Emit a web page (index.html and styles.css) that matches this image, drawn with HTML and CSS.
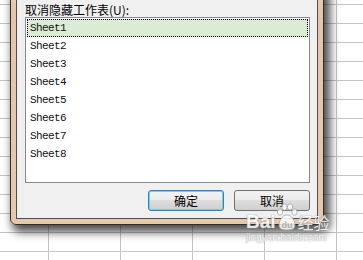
FILE: index.html
```html
<!DOCTYPE html>
<html lang="zh-CN">
<head>
    <meta charset="UTF-8">
    <title>取消隐藏</title>
    <link rel="stylesheet" href="styles.css">
</head>
<body>
    <div class="sheet">
        <!-- Unhide dialog, its title bar is scrolled out of view -->
        <div class="dialog">
            <div class="panel">
                <div class="caption">取消隐藏工作表(U):</div>
                <ul class="sheet-list">
                    <li class="selected">Sheet1</li>
                    <li>Sheet2</li>
                    <li>Sheet3</li>
                    <li>Sheet4</li>
                    <li>Sheet5</li>
                    <li>Sheet6</li>
                    <li>Sheet7</li>
                    <li>Sheet8</li>
                </ul>
                <div class="actions">
                    <button class="btn btn-default">确定</button>
                    <button class="btn">取消</button>
                </div>
            </div>
        </div>

        <div class="watermark">
            <div class="wm-logo">
                <span class="wm-bai">Bai</span>
                <svg class="wm-paw" width="22" height="28" viewBox="0 0 22 28">
                    <ellipse cx="4" cy="9" rx="2.6" ry="3.2" />
                    <ellipse cx="8.5" cy="4" rx="2.6" ry="3.2" />
                    <ellipse cx="14" cy="4" rx="2.6" ry="3.2" />
                    <ellipse cx="18.5" cy="9" rx="2.6" ry="3.2" />
                    <path d="M11 12 C6 12 3 18 3 22 C3 26 6 27 11 27 C16 27 19 26 19 22 C19 18 16 12 11 12 Z" />
                    <text x="11" y="24.5" text-anchor="middle">du</text>
                </svg>
                <span class="wm-cn">经验</span>
            </div>
            <div class="wm-url">jingyan.baidu.com</div>
        </div>
    </div>
</body>
</html>
```

FILE: styles.css
```css
/* Page is the spreadsheet grid behind the dialog */
body {
    margin: 0;
    font-family: "Noto Sans CJK SC", "Liberation Sans", sans-serif;
    font-size: 12px;
}

.sheet {
    position: relative;
    width: 363px;
    height: 260px;
    overflow: hidden;
    background-color: #fff;
    background-image:
        linear-gradient(to right, #c4c4c4 1px, transparent 1px),
        linear-gradient(to bottom, #c4c4c4 1px, transparent 1px);
    background-size: 72px 19px;
    background-position: 48px 4px;
}

/* Window frame (aero basic, beige) */
.dialog {
    position: absolute;
    left: 10px;
    top: -40px;
    width: 314px;
    height: 265px;
    box-sizing: border-box;
    padding: 5px;
    border: 1px solid #2e2e2e;
    border-radius: 6px;
    background: linear-gradient(to bottom, #eedccb 0, #e5c6a8 50px, #e6c8ab 100%);
    box-shadow: 4px 5px 10px 2px rgba(0, 0, 0, 0.7);
}

.panel {
    height: 100%;
    box-sizing: border-box;
    display: flex;
    flex-direction: column;
    justify-content: flex-end;
    padding: 0 7px 7px 8px;
    border: 1px solid #4e4e4e;
    background-color: #f0f0f0;
}

.caption {
    line-height: 14px;
    color: #000;
    white-space: nowrap;
}

/* List of hidden sheets */
.sheet-list {
    height: 166px;
    box-sizing: border-box;
    margin: 0;
    padding: 1px;
    list-style: none;
    border: 1px solid #828790;
    background-color: #fff;
}

.sheet-list li {
    height: 18px;
    box-sizing: border-box;
    padding-left: 2px;
    border: 1px dotted transparent;
    font-family: "Liberation Mono", monospace;
    font-size: 11px;
    letter-spacing: -0.6px;
    line-height: 16px;
    color: #111;
}

.sheet-list li.selected {
    background-color: #dcecd4;
    border-color: #000;
}

/* OK / Cancel */
.actions {
    display: flex;
    justify-content: flex-end;
    gap: 10px;
    margin-top: 7px;
}

.btn {
    width: 76px;
    height: 21px;
    padding: 0;
    border: 1px solid #707070;
    border-radius: 3px;
    background: linear-gradient(to bottom, #f2f2f2 0, #ebebeb 50%, #dddddd 50%, #cfcfcf 100%);
    font-family: inherit;
    font-size: 12px;
    line-height: 19px;
    color: #000;
}

.btn-default {
    border-color: #3c7fb1;
    box-shadow: inset 0 0 0 1px #5fd4f7;
}

/* Site watermark in the lower right corner */
.watermark {
    position: absolute;
    left: 246px;
    top: 203px;
    width: 92px;
    opacity: 0.85;
}

.wm-logo {
    display: flex;
    align-items: flex-end;
}

.wm-bai,
.wm-cn {
    color: #fff;
    text-shadow: 0 0 1px #888, 0 0 1px #888;
}

.wm-bai {
    font-family: "Liberation Sans", sans-serif;
    font-weight: bold;
    font-size: 19px;
    line-height: 18px;
}

.wm-paw {
    fill: #fff;
    stroke: #999;
    stroke-width: 0.8;
}

.wm-paw text {
    font-family: "Liberation Sans", sans-serif;
    font-weight: bold;
    font-size: 9px;
    fill: #bbb;
    stroke: none;
}

.wm-cn {
    font-size: 16px;
    line-height: 18px;
}

.wm-url {
    margin-top: 2px;
    font-family: "Liberation Sans", sans-serif;
    font-size: 10px;
    line-height: 10px;
    color: #fff;
    text-shadow: 0 0 1px #999, 0 0 1px #999;
}
```
